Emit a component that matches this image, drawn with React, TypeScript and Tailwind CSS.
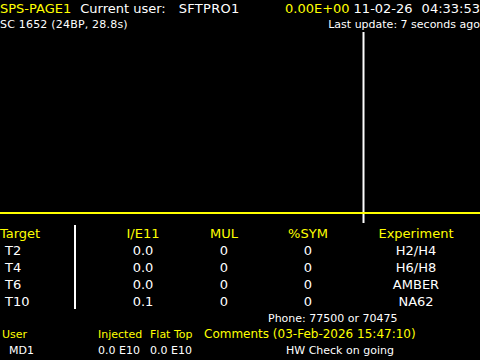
const rows = [
  { target: 'T2', ie: '0.0', mul: '0', sym: '0', exp: 'H2/H4' },
  { target: 'T4', ie: '0.0', mul: '0', sym: '0', exp: 'H6/H8' },
  { target: 'T6', ie: '0.0', mul: '0', sym: '0', exp: 'AMBER' },
  { target: 'T10', ie: '0.1', mul: '0', sym: '0', exp: 'NA62' },
];

export default function App() {
  return (
    <div className="w-[480px] h-[360px] bg-black text-white overflow-hidden font-['DejaVu_Sans',sans-serif] leading-none">
      {/* header */}
      <div className="flex h-[17px] items-center text-[13px] whitespace-nowrap">
        <span className="text-[#ffff00]">SPS-PAGE1</span>
        <span className="ml-[9px]">Current user:</span>
        <span className="ml-[13px] tracking-[0.3px]">SFTPRO1</span>
        <span className="ml-auto text-[#ffff00]">0.00E+00</span>
        <span className="ml-[4px]">11-02-26</span>
        <span className="ml-[9px]">04:33:53</span>
      </div>
      <div className="flex h-[15px] items-center text-[11px] whitespace-nowrap">
        <span className="tracking-[0.2px]">SC 1652 (24BP, 28.8s)</span>
        <span className="ml-auto">Last update: 7 seconds ago</span>
      </div>

      {/* chart */}
      <svg width="480" height="192" className="block">
        <line x1="363.5" y1="0" x2="363.5" y2="191" stroke="#fff" strokeWidth="2" />
        <line x1="0" y1="181" x2="480" y2="181" stroke="#ffff00" strokeWidth="2" />
      </svg>

      {/* table */}
      <div className="flex text-[13px] whitespace-nowrap">
        <div className="w-[74px] shrink-0 flex flex-col">
          <div className="h-[18px] flex items-center text-[#ffff00]">Target</div>
          {rows.map(r => (
            <div key={r.target} className="h-[17px] flex items-center pl-[5px]">{r.target}</div>
          ))}
        </div>
        <div className="w-[2px] shrink-0 bg-white mt-[1px] mb-[1px]" />
        <div className="grid grid-cols-[134px_28px_140px_76px] text-center">
          <div className="h-[18px] flex items-center justify-center text-[#ffff00]">I/E11</div>
          <div className="h-[18px] flex items-center justify-center text-[#ffff00]">MUL</div>
          <div className="h-[18px] flex items-center justify-center text-[#ffff00]">%SYM</div>
          <div className="h-[18px] flex items-center justify-center text-[#ffff00]">Experiment</div>
          {rows.map(r => (
            <div key={r.target} className="contents">
              <div className="h-[17px] flex items-center justify-center">{r.ie}</div>
              <div className="h-[17px] flex items-center justify-center">{r.mul}</div>
              <div className="h-[17px] flex items-center justify-center">{r.sym}</div>
              <div className="h-[17px] flex items-center justify-center">{r.exp}</div>
            </div>
          ))}
        </div>
      </div>

      {/* footer */}
      <div className="text-[11px] whitespace-nowrap">
        <div className="h-[16px] flex items-center pl-[268px]">Phone: 77500 or 70475</div>
        <div className="h-[16px] flex items-center text-[#ffff00]">
          <span className="w-[98px] pl-[2px]">User</span>
          <span className="w-[52px]">Injected</span>
          <span className="w-[54px]">Flat Top</span>
          <span className="text-[12px]">Comments (03-Feb-2026 15:47:10)</span>
        </div>
        <div className="h-[16px] flex items-center">
          <span className="w-[98px] pl-[9px]">MD1</span>
          <span className="w-[52px]">0.0 E10</span>
          <span className="w-[136px]">0.0 E10</span>
          <span>HW Check on going</span>
        </div>
      </div>
    </div>
  );
}
